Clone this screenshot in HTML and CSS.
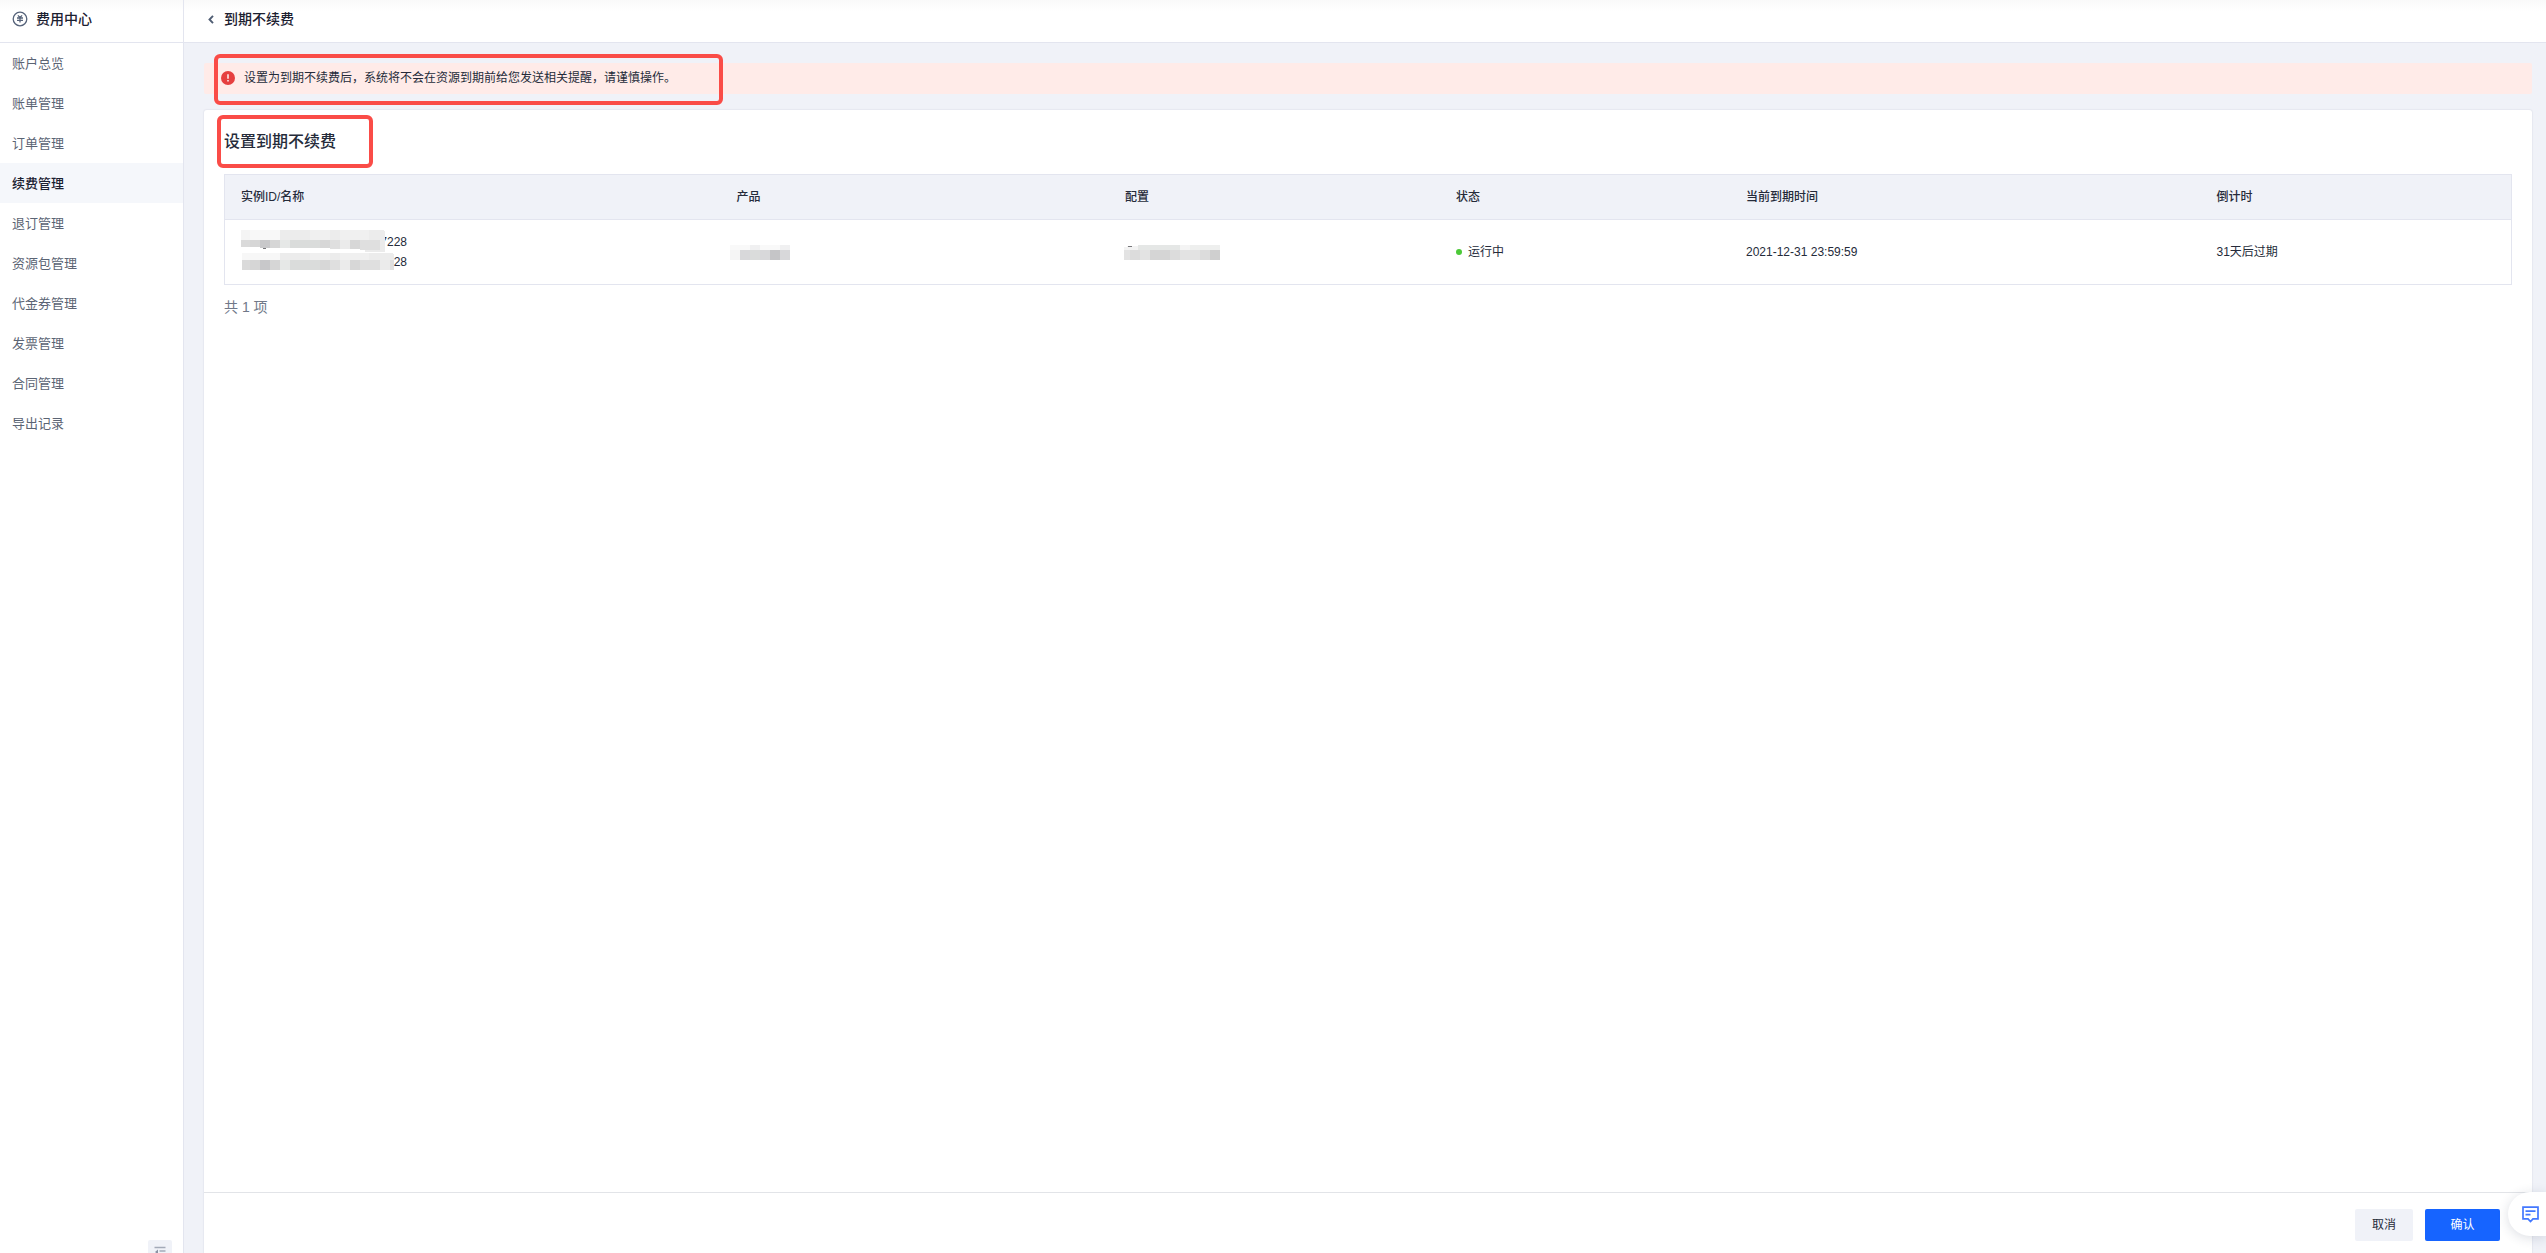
FILE: index.html
```html
<!DOCTYPE html>
<html lang="zh-CN">
<head>
<meta charset="utf-8">
<title>费用中心</title>
<link rel="stylesheet" href="styles.css">
</head>
<body>
<div class="app">
  <aside class="sidebar">
    <div class="brand">
      <svg width="16" height="16" viewBox="0 0 16 16" fill="none" stroke="#56637a"><circle cx="8" cy="8" r="6.800" stroke-width="1.300"/><path d="M5.900 4.400 8 6.500l2.100-2.100M5 7h6M5 9.300h6M8 6.500v5.100" stroke-width="1.300"/></svg>
      <span>费用中心</span>
    </div>
    <nav class="menu">
      <a>账户总览</a>
      <a>账单管理</a>
      <a>订单管理</a>
      <a class="active">续费管理</a>
      <a>退订管理</a>
      <a>资源包管理</a>
      <a>代金券管理</a>
      <a>发票管理</a>
      <a>合同管理</a>
      <a>导出记录</a>
    </nav>
    <button class="collapse">
      <svg width="12" height="12" viewBox="0 0 12 12" fill="none" stroke="#a3aab8"><path d="M.5 1.500h11M5.500 5h6M5.500 8h6M.5 11h11" stroke-width="1.400"/><path d="M4 3.500v5L1 6z" fill="#8a93a5" stroke="none"/></svg>
    </button>
  </aside>
  <div class="main">
    <header class="topbar">
      <svg width="6" height="9" viewBox="0 0 6 9" fill="none" stroke="#4f5d73" stroke-width="1.900"><path d="M5 .8 1.500 4.500 5 8.200"/></svg>
      <h1>到期不续费</h1>
    </header>
    <div class="content">
      <div class="alert">
        <svg width="14" height="14" viewBox="0 0 14 14"><circle cx="7" cy="7" r="7" fill="#e63f3f"/><path d="M7 3.300v4.500M7 9v1.600" stroke="#fff" stroke-width="1.400"/></svg>
        <span>设置为到期不续费后，系统将不会在资源到期前给您发送相关提醒，请谨慎操作。</span>
        <div class="mark mark-alert"></div>
      </div>
      <section class="card">
        <div class="mark mark-title"></div>
        <div class="card-body">
          <h2>设置到期不续费</h2>
          <div class="table">
            <div class="row head">
              <div>实例ID/名称</div><div>产品</div><div>配置</div><div>状态</div><div>当前到期时间</div><div>倒计时</div>
            </div>
            <div class="row data">
              <div class="ids">
                <p>7228</p>
                <p>28</p>
                <svg class="mosaic" width="154" height="42" viewBox="0 0 154 42" shape-rendering="crispEdges">
                  <path d="M0 0h9v10H0z" fill="#f4f4f4"/><path d="M9 0h30v10H9z" fill="#f8f8f8"/><path d="M39 0h104l1 2v8H39z" fill="#ececec"/><path d="M69 0h20v10H69zM99 0h29v10H99z" fill="#f0f0f0"/>
                  <path d="M0 10h9v7H0z" fill="#dadada"/><path d="M9 10h10v7H9zM29 10h10v8H29z" fill="#d6d6d6"/><path d="M19 10h10v8H19z" fill="#c8c8ca"/><path d="M39 10h10v8H39z" fill="#e6e8e7"/><path d="M49 10h30v8H49z" fill="#dadcdb"/><path d="M79 10h10v8H79zM109 10h10v9H109z" fill="#d7d7d7"/><path d="M89 10h10v9H89zM119 10h20v10H119z" fill="#dfdfdf"/><path d="M99 10h10v9H99zM139 10h5v12H124v-2h15z" fill="#ebebeb"/>
                  <path d="M22 18h3v1H22z" fill="#77777b"/>
                  <path d="M1 23h38v7H1z" fill="#f7f7f7"/><path d="M39 23h113l1 2v5H39z" fill="#ececec"/><path d="M69 23h20v7H69zM99 23h29v7H99z" fill="#f0f0f0"/>
                  <path d="M1 30h8v10H1z" fill="#dadada"/><path d="M9 30h10v10H9zM29 30h10v10H29z" fill="#d6d6d6"/><path d="M19 30h10v10H19z" fill="#c8c8ca"/><path d="M39 30h10v10H39z" fill="#e6e8e7"/><path d="M49 30h30v10H49z" fill="#dadcdb"/><path d="M79 30h10v10H79zM109 30h10v10H109z" fill="#d7d7d7"/><path d="M89 30h10v10H89zM119 30h20v10H119zM149 30h4v10H149z" fill="#dfdfdf"/><path d="M99 30h10v10H99zM139 30h10v10H139z" fill="#ebebeb"/>
                </svg>
              </div>
              <div class="blurred blurred-product">
                <svg width="60" height="15" viewBox="0 0 60 15" shape-rendering="crispEdges"><path d="M0 0h50v5H0z" fill="#f9f9f9"/><path d="M20 0h10v5H20zM50 0h10v5H50z" fill="#f0f0f1"/><path d="M0 5h10v10H0z" fill="#f5f5f5"/><path d="M10 5h50v10H10z" fill="#d8d8da"/><path d="M20 5h10v10H20z" fill="#dadcdb"/><path d="M40 5h10v10H40z" fill="#c5c5c7"/></svg>
              </div>
              <div class="blurred blurred-config">
                <svg width="96" height="15" viewBox="0 0 96 15" shape-rendering="crispEdges"><path d="M0 2 6 1h8v4H0z" fill="#f3f3f3"/><path d="M4 1h4v1H4z" fill="#77777b"/><path d="M14 0h42v5H14z" fill="#e5e7e6"/><path d="M56 0h10v5H56z" fill="#f4f4f4"/><path d="M66 0h30v5H66z" fill="#eeefee"/><path d="M0 5h96v10H0z" fill="#e3e3e3"/><path d="M6 5h10v10H6zM46 5h10v10H46zM76 5h10v10H76z" fill="#dcdcdc"/><path d="M26 5h20v10H26z" fill="#d5d5d5"/><path d="M86 5h10v10H86z" fill="#cfcfcf"/></svg>
              </div>
              <div class="status"><i></i>运行中</div>
              <div>2021-12-31 23:59:59</div>
              <div>31天后过期</div>
            </div>
          </div>
          <p class="total">共 1 项</p>
        </div>
        <footer class="actions">
          <button class="btn">取消</button>
          <button class="btn primary">确认</button>
        </footer>
      </section>
    </div>
  </div>
  <div class="chat">
    <svg width="17" height="17" viewBox="0 0 17 17" fill="none" stroke="#4378ff" stroke-width="1.700"><path d="M1 1.200h15v11.600h-5L8.500 15.500 6 12.800H1zM3.500 5.200h10M3.500 8.700h5"/></svg>
  </div>
</div>
</body>
</html>
```
FILE: styles.css
```css
* {
  box-sizing: border-box;
  margin: 0;
  padding: 0;
}

body {
  font: 12px/20px "Liberation Sans", "Noto Sans CJK SC", sans-serif;
  color: #252b3a;
  background: #f0f2f8;
}

svg {
  display: block;
  flex: none;
}

button {
  border: 0;
  font: inherit;
  color: inherit;
}

.app {
  display: flex;
  height: 1253px;
  overflow: hidden;
  position: relative;
}

.sidebar {
  flex: none;
  width: 184px;
  background: #fff;
  border-right: 1px solid #e3e5ef;
  display: flex;
  flex-direction: column;
  overflow: hidden;
}

.brand,
.topbar {
  flex: none;
  height: 43px;
  display: flex;
  align-items: center;
  border-bottom: 1px solid #e3e5ef;
  background: linear-gradient(#f9f9f9, #fff 12px);
  color: #1b2030;
}

.brand {
  gap: 8px;
  padding: 0 0 4px 12px;
  font-size: 14px;
  font-weight: 500;
}

.menu {
  flex: 1;
}

.menu a {
  display: block;
  height: 40px;
  padding: 1px 0 0 12px;
  line-height: 40px;
  font-size: 13px;
  color: #5b6474;
}

.menu a.active {
  background: #f5f7fb;
  font-weight: 500;
  color: #1b2030;
}

.collapse {
  flex: none;
  width: 24px;
  height: 24px;
  margin: 0 11px -11px auto;
  border-radius: 2px;
  background: #f0f2f8;
  display: flex;
  align-items: center;
  justify-content: center;
}

.main {
  flex: 1;
  min-width: 0;
  display: flex;
  flex-direction: column;
}

.topbar {
  padding: 0 24px 4px;
  gap: 10px;
}

h1 {
  font-size: 14px;
  font-weight: 500;
}

.content {
  flex: 1;
  display: flex;
  flex-direction: column;
  padding: 20px 14px 0 20px;
}

.alert {
  height: 31px;
  background: #ffebe8;
  border-radius: 2px;
  display: flex;
  align-items: center;
  padding-left: 17px;
  gap: 9px;
  position: relative;
}

.alert > svg {
  margin-top: -1px;
}

.alert span {
  margin-top: -2px;
}

.mark {
  position: absolute;
  border: 4px solid #fa4c47;
  border-radius: 6px;
}

.mark-alert {
  left: 10px;
  top: -9px;
  width: 509px;
  height: 51px;
}

.mark-title {
  left: 13px;
  top: 5px;
  width: 156px;
  height: 53px;
}

.card {
  flex: 1;
  margin-top: 16px;
  background: #fff;
  border-radius: 3px 3px 0 0;
  box-shadow: 0 0 1px 1px #e6e8f0;
  display: flex;
  flex-direction: column;
  position: relative;
}

.card-body {
  flex: 1;
  padding: 19px 20px 0;
}

h2 {
  height: 45px;
  line-height: 26px;
  font-size: 16px;
  font-weight: 500;
}

.table {
  border: 1px solid #e3e5ef;
}

.row {
  display: grid;
  grid-template-columns: 495.5px 388.5px 331px 290px 470.5px 1fr;
  align-items: center;
}

.row > div {
  padding-left: 16px;
}

.head {
  height: 45px;
  background: #f0f2f8;
  border-bottom: 1px solid #e3e5ef;
  font-weight: 500;
}

.data {
  height: 64px;
}

.ids {
  position: relative;
}

.ids p {
  width: 166px;
  text-align: right;
}

.mosaic {
  position: absolute;
  left: 16px;
  top: -2px;
}

.row > .blurred-product {
  padding-left: 9px;
}

.row > .blurred-config {
  padding-left: 15px;
}

.status {
  display: flex;
  align-items: center;
  gap: 6px;
}

.status i {
  width: 6px;
  height: 6px;
  border-radius: 50%;
  background: #4cc938;
}

.total {
  margin-top: 12px;
  font-size: 14px;
  color: #707888;
}

.actions {
  flex: none;
  height: 61px;
  border-top: 1px solid #e2e4e8;
  display: flex;
  justify-content: flex-end;
  gap: 12px;
  padding: 16px 32px 0 0;
}

.btn {
  width: 58px;
  height: 32px;
  border-radius: 2px;
  background: #f0f2f8;
}

.btn.primary {
  width: 75px;
  background: #1664ff;
  color: #fff;
}

.chat {
  position: absolute;
  right: 0;
  bottom: 17px;
  width: 38px;
  height: 44px;
  padding: 14px 0 0 14px;
  border-radius: 22px 0 0 22px;
  background: #fff;
  box-shadow: 0 2px 12px rgba(40, 50, 80, .16);
}
```
